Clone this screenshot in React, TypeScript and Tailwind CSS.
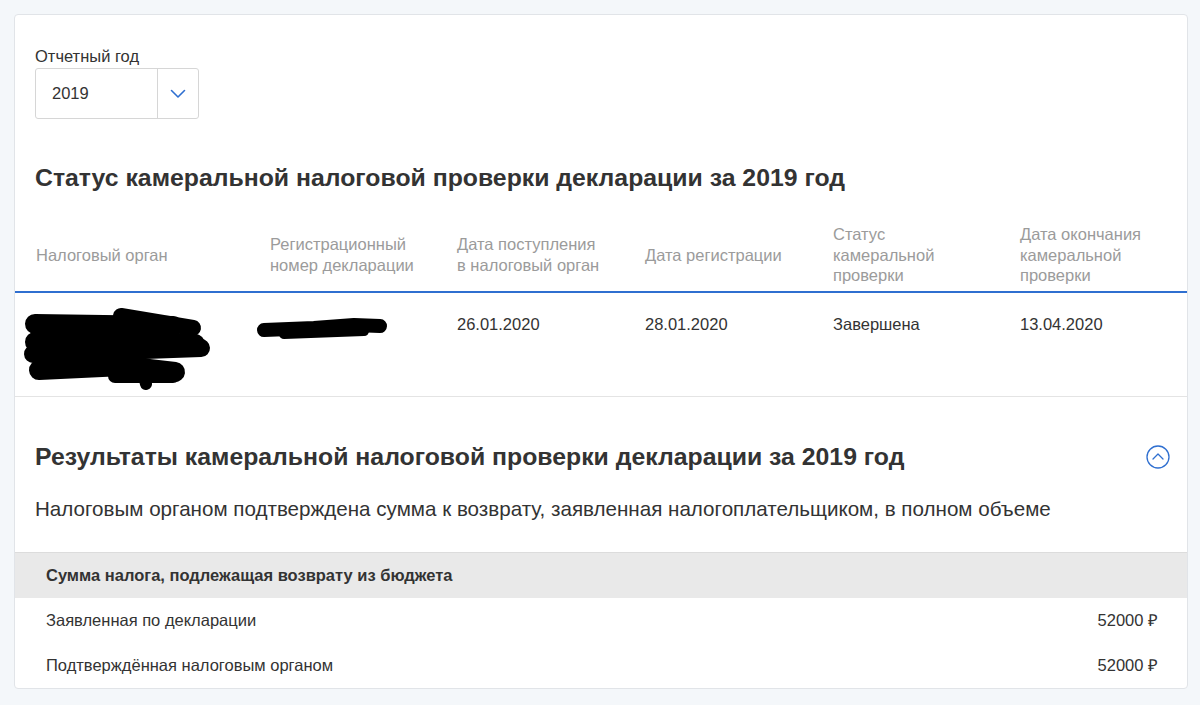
const headers = [
  "Налоговый орган",
  "Регистрационный номер декларации",
  "Дата поступления в налоговый орган",
  "Дата регистрации",
  "Статус камеральной проверки",
  "Дата окончания камеральной проверки",
];

const cols = "grid grid-cols-[234px_187px_188px_188px_187px_1fr] pl-[21px]";

function ChevronDown() {
  return (
    <svg width="16" height="10" viewBox="0 0 16 10" fill="none">
      <path d="M1.5 1.5 L8 8 L14.5 1.5" stroke="#2f6fd0" strokeWidth="1.6" strokeLinecap="round" strokeLinejoin="round" />
    </svg>
  );
}

function CircleUp() {
  return (
    <svg width="24" height="24" viewBox="0 0 24 24" fill="none">
      <circle cx="12" cy="12" r="11" stroke="#2f6fd0" strokeWidth="1.3" />
      <path d="M7 14 L12 9 L17 14" stroke="#2f6fd0" strokeWidth="1.3" strokeLinecap="round" strokeLinejoin="round" />
    </svg>
  );
}

// закрашенные от руки данные налогового органа
function ScribbleBig() {
  return (
    <svg width="190" height="86" viewBox="0 0 190 86" fill="none" className="-ml-[13px] mt-[11px]">
      <g stroke="#000" strokeLinecap="round" strokeLinejoin="round">
        <path d="M12 20 L150 22" strokeWidth="20" />
        <path d="M98 12 L170 24" strokeWidth="16" />
        <path d="M12 38 L172 40" strokeWidth="20" />
        <path d="M10 50 L178 44" strokeWidth="18" />
        <path d="M16 66 L100 62 L152 68" strokeWidth="20" />
        <path d="M92 72 L150 72" strokeWidth="14" />
        <path d="M122 76 L123 80" strokeWidth="12" />
      </g>
    </svg>
  );
}

function ScribbleSmall() {
  return (
    <svg width="136" height="28" viewBox="0 0 136 28" fill="none" className="-ml-[16px] mt-[22px]">
      <g stroke="#000" strokeLinecap="round" strokeLinejoin="round">
        <path d="M10 15 L60 13 L100 10 L126 11" strokeWidth="14" />
        <path d="M30 19 L110 16" strokeWidth="10" />
      </g>
    </svg>
  );
}

export default function App() {
  return (
    <div className="min-h-screen bg-[#f4f7fa] pl-[14px] pt-[14px] pb-[16px] font-['Liberation_Sans',Arial,sans-serif] text-[#333]">
      <div className="w-[1174px] overflow-hidden rounded-[4px] border border-[#e1e4e8] bg-white">
        <div className="px-[20px] pt-[31px]">
          <p className="text-[16.5px] leading-[20px]">Отчетный год</p>
          <div className="mt-[2px] flex h-[51px] w-[164px] rounded-[3px] border border-[#d6d6d6]">
            <div className="flex flex-1 items-center pl-[16px] text-[16.5px]">2019</div>
            <div className="flex w-[41px] items-center justify-center border-l border-[#d6d6d6]">
              <ChevronDown />
            </div>
          </div>
          <h2 className="mt-[43px] text-[24.8px] font-bold leading-[32px]">
            Статус камеральной налоговой проверки декларации за 2019 год
          </h2>
        </div>

        <div className={`${cols} mt-[30px] items-center border-b-2 border-[#2f6fd0] pb-[5px]`}>
          {headers.map((h) => (
            <div key={h} className="pr-[40px] text-[16.5px] leading-[20.5px] text-[#9b9b9b]">
              {h}
            </div>
          ))}
        </div>

        <div className={`${cols} h-[104px] items-start border-b border-[#e4e4e4] text-[16.5px] leading-[20px]`}>
          <div>
            <ScribbleBig />
          </div>
          <div>
            <ScribbleSmall />
          </div>
          <div className="pt-[21px]">26.01.2020</div>
          <div className="pt-[21px]">28.01.2020</div>
          <div className="pt-[21px]">Завершена</div>
          <div className="pt-[21px]">13.04.2020</div>
        </div>

        <div className="pl-[20px] pr-[17px]">
          <div className="mt-[44px] flex items-center justify-between">
            <h2 className="text-[24.8px] font-bold leading-[32px]">
              Результаты камеральной налоговой проверки декларации за 2019 год
            </h2>
            <CircleUp />
          </div>
          <p className="mt-[22px] text-[20.6px] leading-[28px]">
            Налоговым органом подтверждена сумма к возврату, заявленная налогоплательщиком, в полном объеме
          </p>
        </div>

        <div className="mt-[29px] flex h-[46px] items-center border-t border-[#dcdcdc] bg-[#e9e9e9] pl-[31px] text-[16.5px] font-bold">
          Сумма налога, подлежащая возврату из бюджета
        </div>
        <div className="flex h-[45px] items-center justify-between pl-[31px] pr-[29px] text-[16.5px]">
          <span>Заявленная по декларации</span>
          <span>52000 ₽</span>
        </div>
        <div className="flex h-[45px] items-center justify-between pl-[31px] pr-[29px] text-[16.5px]">
          <span>Подтверждённая налоговым органом</span>
          <span>52000 ₽</span>
        </div>
      </div>
    </div>
  );
}
